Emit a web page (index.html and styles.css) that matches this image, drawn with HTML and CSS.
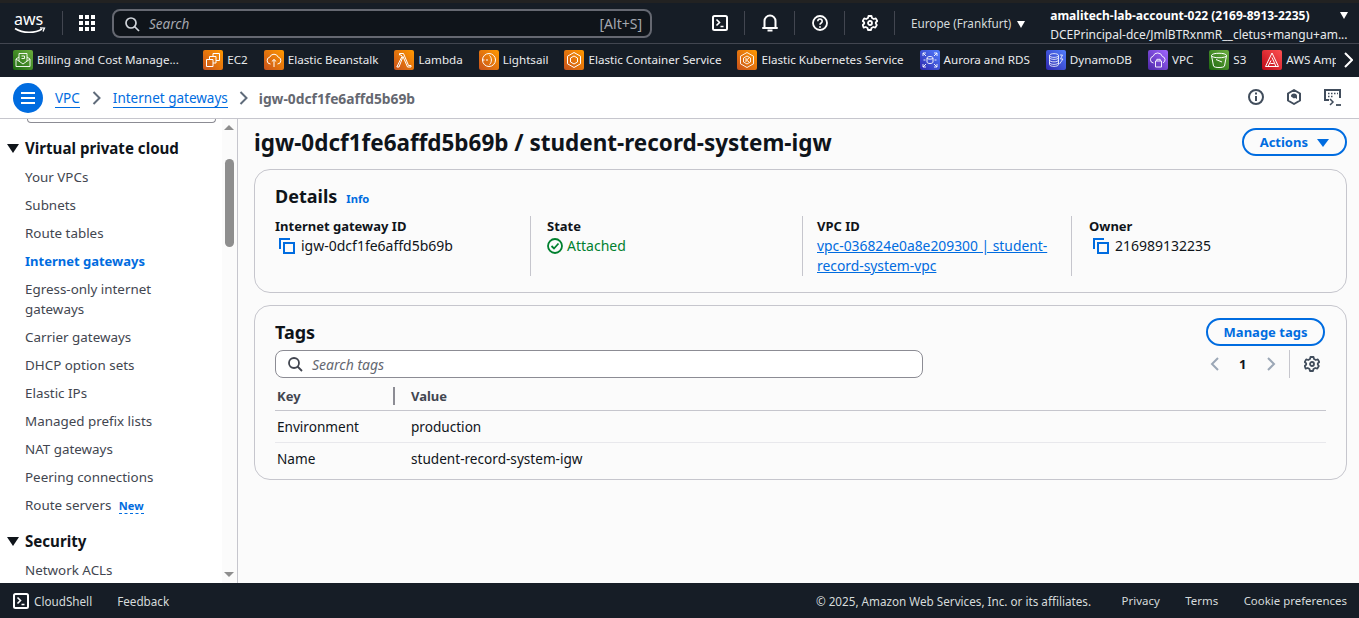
FILE: index.html
```html
<!DOCTYPE html>
<html lang="en">
<head>
    <meta charset="UTF-8">
    <meta name="viewport" content="width=device-width, initial-scale=1.0">
    <title>igw-0dcf1fe6affd5b69b | VPC Console</title>
    <link rel="stylesheet" href="styles.css">
</head>
<body>

    <!-- Top bar -->
    <header class="topnav">
        <div class="aws-logo">
            <span class="aws-text">aws</span>
            <svg width="32" height="8" viewBox="0 0 32 8">
                <path d="M1 1.500c8 5 20 5 27 .5" fill="none" stroke="#fff" stroke-width="1.600"/>
                <path d="M26 .8l4.500 .2-1.500 3.600" fill="none" stroke="#fff" stroke-width="1.300"/>
            </svg>
        </div>
        <span class="nav-sep first"></span>
        <svg class="grid-icon" width="16" height="16" viewBox="0 0 16 16" fill="#fff">
            <rect x="0" y="0" width="4" height="4"/><rect x="6" y="0" width="4" height="4"/><rect x="12" y="0" width="4" height="4"/>
            <rect x="0" y="6" width="4" height="4"/><rect x="6" y="6" width="4" height="4"/><rect x="12" y="6" width="4" height="4"/>
            <rect x="0" y="12" width="4" height="4"/><rect x="6" y="12" width="4" height="4"/><rect x="12" y="12" width="4" height="4"/>
        </svg>
        <div class="nav-search">
            <svg width="16" height="16" viewBox="0 0 16 16" fill="none" stroke="#d1d5db" stroke-width="1.700"><circle cx="7" cy="7" r="5"/><path d="M10.500 10.500l4.500 4.500"/></svg>
            <span class="nav-search-text">Search</span>
            <span class="nav-shortcut">[Alt+S]</span>
        </div>
        <div class="nav-icons">
            <span class="nav-icon"><svg width="16" height="16" viewBox="0 0 16 16" fill="none" stroke="#fff" stroke-width="2"><rect x="1" y="1" width="14" height="14" rx="1.500"/><path d="M4.500 4.500l3 3-3 3M8.500 11.500h3" stroke-width="1.600"/></svg></span>
            <span class="nav-icon"><svg width="16" height="18" viewBox="0 0 16 18" fill="none" stroke="#fff" stroke-width="2"><path d="M2.500 13V7a5.500 5.500 0 0 1 11 0v6l1.500 1H1z" stroke-linejoin="round"/><path d="M5.500 16.500h5"/></svg></span>
            <span class="nav-icon"><svg width="16" height="16" viewBox="0 0 16 16" fill="none" stroke="#fff" stroke-width="1.800"><circle cx="8" cy="8" r="7"/><path d="M5.800 6.200a2.200 2.200 0 1 1 3.400 1.800c-.8.500-1.200 1-1.200 1.800" stroke-width="1.600"/><path d="M8 11.200v1.600"/></svg></span>
            <span class="nav-icon"><svg width="16" height="16" viewBox="0 0 16 16" fill="none" stroke="#fff" stroke-width="1.800"><path d="M6.500 1h3l.5 2 1.800 1 2-.6 1.500 2.600-1.500 1.400v1.200L14.800 10l-1.500 2.600-2-.6-1.800 1-.5 2h-3l-.5-2-1.800-1-2 .6L.7 10l1.500-1.400V7.400L.7 6l1.500-2.600 2 .6L6 3z" stroke-linejoin="round"/><circle cx="8" cy="8" r="2"/></svg></span>
        </div>
        <span class="nav-region">Europe (Frankfurt) <i class="caret-white"></i></span>
        <div class="nav-account">
            <div class="account-name">amalitech-lab-account-022 (2169-8913-2235)<i class="caret-white account-caret"></i></div>
            <div class="account-role">DCEPrincipal-dce/JmlBTRxnmR__cletus+mangu+am...</div>
        </div>
    </header>

    <!-- Favorites -->
    <nav class="favbar">
        <span class="fav fav-first"><svg class="fav-icon" viewBox="-2 0 20 20"><defs><linearGradient id="gGreen" x1="0" y1="1" x2="1" y2="0"><stop offset="0" stop-color="#1b660f"/><stop offset="1" stop-color="#6cae3e"/></linearGradient></defs><rect x="-2" width="20" height="20" rx="2" fill="url(#gGreen)"/><path d="M1 9l7 5 7-5v7.500H1zM1 9l3-2M15 9l-3-2M4 11V3.500h8V11M6.500 6h3v2.500h-3" fill="none" stroke="#fff" stroke-width=".9"/></svg>Billing and Cost Manage...</span>
        <span class="fav"><svg class="fav-icon" viewBox="-2 0 20 20"><defs><linearGradient id="gOrange" x1="0" y1="1" x2="1" y2="0"><stop offset="0" stop-color="#c8511b"/><stop offset="1" stop-color="#ff9900"/></linearGradient></defs><rect x="-2" width="20" height="20" rx="2" fill="url(#gOrange)"/><path d="M1.500 9.500h6.500v7H1.500zM4.500 9.500V6.500h6.500v6.500H8M8 6.500V3.500h6.500v7H11" fill="none" stroke="#fff" stroke-width="1"/></svg>EC2</span>
        <span class="fav"><svg class="fav-icon" viewBox="-2 0 20 20"><rect x="-2" width="20" height="20" rx="2" fill="url(#gOrange)"/><path d="M4.500 14a3.500 3.500 0 0 1-.7-6.900 4.500 4.500 0 0 1 8.400 0 3.500 3.500 0 0 1-.7 6.900M8 17V9.500M5.800 11.500L8 9.500l2.200 2" fill="none" stroke="#fff" stroke-width="1"/></svg>Elastic Beanstalk</span>
        <span class="fav"><svg class="fav-icon" viewBox="-2 0 20 20"><rect x="-2" width="20" height="20" rx="2" fill="url(#gOrange)"/><path d="M3.500 3.500h4l5 12h2.500v1.500h-3.500l-4.500-10.500L3 17H.8l5.200-10.500L5.200 5H3.500z" fill="none" stroke="#fff" stroke-width="1"/></svg>Lambda</span>
        <span class="fav"><svg class="fav-icon" viewBox="-2 0 20 20"><rect x="-2" width="20" height="20" rx="2" fill="url(#gOrange)"/><circle cx="8" cy="10" r="6.500" fill="none" stroke="#fff"/><path d="M1.500 10h2M5 10h2M8.500 5.500c2.500 2 2.500 7 0 9" fill="none" stroke="#fff"/></svg>Lightsail</span>
        <span class="fav"><svg class="fav-icon" viewBox="-2 0 20 20"><rect x="-2" width="20" height="20" rx="2" fill="url(#gOrange)"/><path d="M8 2.500l6.500 3.700v7.600L8 17.500l-6.500-3.700V6.200zM8 6l3.500 2v4L8 14l-3.500-2V8z" fill="none" stroke="#fff"/></svg>Elastic Container Service</span>
        <span class="fav"><svg class="fav-icon" viewBox="-2 0 20 20"><rect x="-2" width="20" height="20" rx="2" fill="url(#gOrange)"/><path d="M8 2.500l6.500 3.700v7.600L8 17.500l-6.500-3.700V6.200zM8 6l3.500 2v4L8 14l-3.500-2V8zM7 8v4M10 8L7.500 10l2.500 2" fill="none" stroke="#fff" stroke-width=".9"/></svg>Elastic Kubernetes Service</span>
        <span class="fav"><svg class="fav-icon" viewBox="-2 0 20 20"><defs><linearGradient id="gBlue" x1="0" y1="1" x2="1" y2="0"><stop offset="0" stop-color="#2e27ad"/><stop offset="1" stop-color="#527fff"/></linearGradient></defs><rect x="-2" width="20" height="20" rx="2" fill="url(#gBlue)"/><path d="M1 6V3h3M12 3h3v3M1 14v3h3M12 17h3v-3M1 3l3 3M15 3l-3 3M1 17l3-3M15 17l-3-3M5 8c0-2 6-2 6 0v4c0 2-6 2-6 0zM5 8c0 1.500 6 1.500 6 0M1.500 10h2M12.500 10h2" fill="none" stroke="#fff" stroke-width=".9"/></svg>Aurora and RDS</span>
        <span class="fav"><svg class="fav-icon" viewBox="-2 0 20 20"><rect x="-2" width="20" height="20" rx="2" fill="url(#gBlue)"/><path d="M1.500 5.500c0-2.500 9-2.500 9 0v9c0 2.500-9 2.500-9 0zM1.500 5.500c0 2.500 9 2.500 9 0M1.500 10c0 2.500 9 2.500 9 0M1.500 7.500c0 2.500 9 2.500 9 0M1.500 12.500c0 2.500 9 2.500 9 0M12 5h2.500L12.500 9H15l-3.500 5" fill="none" stroke="#fff" stroke-width=".8"/></svg>DynamoDB</span>
        <span class="fav"><svg class="fav-icon" viewBox="-2 0 20 20"><defs><linearGradient id="gPurple" x1="0" y1="1" x2="1" y2="0"><stop offset="0" stop-color="#4d27a8"/><stop offset="1" stop-color="#a166ff"/></linearGradient></defs><rect x="-2" width="20" height="20" rx="2" fill="url(#gPurple)"/><path d="M3.500 13a3.400 3.400 0 0 1-.4-6.700 4.800 4.800 0 0 1 9.200.2 3.300 3.300 0 0 1 .7 6.300M5.500 11h6v6h-6zM6.800 11V9.300h3.400V11" fill="none" stroke="#fff" stroke-width=".9"/></svg>VPC</span>
        <span class="fav"><svg class="fav-icon" viewBox="-2 0 20 20"><rect x="-2" width="20" height="20" rx="2" fill="url(#gGreen)"/><path d="M.5 5.500c0-3 15-3 15 0l-2 10.500c-.4 2-10.600 2-11 0zM.5 5.500c0 3 15 3 15 0M5 9.500l6 2.500" fill="none" stroke="#fff"/></svg>S3</span>
        <span class="fav fav-amp"><svg class="fav-icon" viewBox="-2 0 20 20"><defs><linearGradient id="gRed" x1="0" y1="1" x2="1" y2="0"><stop offset="0" stop-color="#bd0816"/><stop offset="1" stop-color="#ff5252"/></linearGradient></defs><rect x="-2" width="20" height="20" rx="2" fill="url(#gRed)"/><path d="M8 3l6.500 13.500h-13zM8 7.500l4 9M4 16.500l3-6M6.300 13.500h3.500" fill="none" stroke="#fff"/></svg><span class="fav-cut">AWS Amplify</span></span>
        <svg class="fav-more" width="10" height="16" viewBox="0 0 10 16" fill="none" stroke="#fff" stroke-width="2"><path d="M2 1l7 7-7 7"/></svg>
    </nav>

    <!-- Breadcrumbs -->
    <div class="crumbbar">
        <span class="menu-btn"><svg width="16" height="14" viewBox="0 0 16 14" stroke="#fff" stroke-width="2"><path d="M1 2h14M1 7h14M1 12h14"/></svg></span>
        <a class="crumb">VPC</a>
        <svg class="crumb-sep" width="9" height="14" viewBox="0 0 9 14" fill="none" stroke="#5f6b7a" stroke-width="2"><path d="M1.500 1l6 6-6 6"/></svg>
        <a class="crumb">Internet gateways</a>
        <svg class="crumb-sep crumb-sep-last" width="9" height="14" viewBox="0 0 9 14" fill="none" stroke="#5f6b7a" stroke-width="2"><path d="M1.500 1l6 6-6 6"/></svg>
        <span class="crumb-current">igw-0dcf1fe6affd5b69b</span>
        <div class="crumb-tools">
            <svg width="16" height="16" viewBox="0 0 16 16" fill="none" stroke="#414d5c" stroke-width="2"><circle cx="8" cy="8" r="7"/><path d="M8 7v5M8 3.500v2"/></svg>
            <svg width="16" height="16" viewBox="0 0 16 16" fill="none" stroke="#414d5c" stroke-width="2"><path d="M8 1l6 3.500v7L8 15l-6-3.500v-7z" stroke-linejoin="round"/><path d="M5 7.500a3 3 0 0 1 6 0L8 9.500z" fill="#414d5c" stroke="none"/><path d="M5 6.500l6 3.500v-3L8 5z" fill="#414d5c" stroke="none"/></svg>
            <svg width="17" height="17" viewBox="0 0 17 17" fill="none" stroke="#414d5c" stroke-width="2"><path d="M5 11H1V1h15v8"/><path d="M4 4.500h1.500M7 4.500h1.500M10 4.500h1.500M13 4.500h1M4 7.500h1.500M7 7.500h1.500" stroke-width="1.500"/><path d="M6 10l3 3-3 3" stroke-width="1.500"/><path d="M12 16h5" stroke-width="1.800"/></svg>
        </div>
    </div>

    <div class="layout">
        <!-- Side navigation -->
        <aside class="sidenav">
            <div class="sidenav-list">
                <div class="side-filter"></div>
                <div class="side-head"><i class="caret-dark"></i>Virtual private cloud</div>
                <a class="side-link">Your VPCs</a>
                <a class="side-link">Subnets</a>
                <a class="side-link">Route tables</a>
                <a class="side-link active">Internet gateways</a>
                <a class="side-link">Egress-only internet gateways</a>
                <a class="side-link">Carrier gateways</a>
                <a class="side-link">DHCP option sets</a>
                <a class="side-link">Elastic IPs</a>
                <a class="side-link">Managed prefix lists</a>
                <a class="side-link">NAT gateways</a>
                <a class="side-link">Peering connections</a>
                <a class="side-link">Route servers <span class="badge-new">New</span></a>
                <div class="side-head side-head-2"><i class="caret-dark"></i>Security</div>
                <a class="side-link">Network ACLs</a>
            </div>
            <div class="scrollbar">
                <i class="scroll-up"></i>
                <span class="scroll-thumb"></span>
                <i class="scroll-down"></i>
            </div>
        </aside>

        <!-- Content -->
        <main class="content">
            <div class="page-head">
                <h1>igw-0dcf1fe6affd5b69b / student-record-system-igw</h1>
                <button class="btn btn-actions">Actions <i class="caret-blue"></i></button>
            </div>

            <section class="card details">
                <h2>Details <a class="info">Info</a></h2>
                <div class="columns">
                    <div class="col col-1">
                        <div class="label">Internet gateway ID</div>
                        <div class="value copy">
                            <svg class="copy-icon" width="16" height="16" viewBox="0 0 16 16" fill="none" stroke="#006ce0" stroke-width="2"><path d="M1 11V1h10"/><rect x="5" y="5" width="10" height="10"/></svg>
                            igw-0dcf1fe6affd5b69b
                        </div>
                    </div>
                    <div class="col col-2">
                        <div class="label">State</div>
                        <div class="value state">
                            <svg width="16" height="16" viewBox="0 0 16 16" fill="none" stroke="#00802f" stroke-width="1.800"><circle cx="8" cy="8" r="7"/><path d="M4.500 8l2.500 2.500 4.500-5"/></svg>
                            Attached
                        </div>
                    </div>
                    <div class="col col-3">
                        <div class="label">VPC ID</div>
                        <a class="value link">vpc-036824e0a8e209300 | student-record-system-vpc</a>
                    </div>
                    <div class="col col-4">
                        <div class="label">Owner</div>
                        <div class="value copy">
                            <svg class="copy-icon" width="16" height="16" viewBox="0 0 16 16" fill="none" stroke="#006ce0" stroke-width="2"><path d="M1 11V1h10"/><rect x="5" y="5" width="10" height="10"/></svg>
                            216989132235
                        </div>
                    </div>
                </div>
            </section>

            <section class="card tags">
                <div class="tags-head">
                    <h2>Tags</h2>
                    <button class="btn btn-manage">Manage tags</button>
                </div>
                <div class="tags-tools">
                    <div class="tag-search">
                        <svg width="16" height="16" viewBox="0 0 16 16" fill="none" stroke="#424650" stroke-width="1.800"><circle cx="7" cy="7" r="5"/><path d="M10.500 10.500l4.500 4.500"/></svg>
                        <span>Search tags</span>
                    </div>
                    <div class="pager">
                        <svg width="9" height="14" viewBox="0 0 9 14" fill="none" stroke="#9ba7b6" stroke-width="2"><path d="M8 1L2 7l6 6"/></svg>
                        <b>1</b>
                        <svg width="9" height="14" viewBox="0 0 9 14" fill="none" stroke="#9ba7b6" stroke-width="2"><path d="M1 1l6 6-6 6"/></svg>
                        <span class="pager-sep"></span>
                        <svg width="16" height="16" viewBox="0 0 16 16" fill="none" stroke="#414d5c" stroke-width="1.800"><path d="M6.500 1h3l.5 2 1.800 1 2-.6 1.500 2.600-1.500 1.400v1.200L14.800 10l-1.500 2.600-2-.6-1.800 1-.5 2h-3l-.5-2-1.800-1-2 .6L.7 10l1.500-1.400V7.400L.7 6l1.500-2.600 2 .6L6 3z" stroke-linejoin="round"/><circle cx="8" cy="8" r="2"/></svg>
                    </div>
                </div>
                <table class="tag-table">
                    <thead>
                        <tr><th class="key-col"><span class="th-inner">Key</span></th><th>Value</th></tr>
                    </thead>
                    <tbody>
                        <tr><td>Environment</td><td>production</td></tr>
                        <tr><td>Name</td><td>student-record-system-igw</td></tr>
                    </tbody>
                </table>
            </section>
        </main>
    </div>

    <!-- Footer -->
    <footer class="footer">
        <svg width="16" height="16" viewBox="0 0 16 16" fill="none" stroke="#fff" stroke-width="2"><rect x="1" y="1" width="14" height="14" rx="1.500"/><path d="M4.500 4.500l3 3-3 3M8.500 11.500h3" stroke-width="1.600"/></svg>
        <span class="foot-shell">CloudShell</span>
        <span class="foot-feedback">Feedback</span>
        <span class="foot-copy">© 2025, Amazon Web Services, Inc. or its affiliates.</span>
        <span class="foot-link">Privacy</span>
        <span class="foot-link">Terms</span>
        <span class="foot-link">Cookie preferences</span>
    </footer>

</body>
</html>
```

FILE: styles.css
```css
* {
    box-sizing: border-box;
}
html, body {
    height: 100%;
}
body {
    margin: 0;
    height: 618px;
    overflow: hidden;
    display: flex;
    flex-direction: column;
    font-family: "Noto Sans", sans-serif;
    font-size: 13px;
    color: #0f141a;
    background: #fbfbfb;
}

/* top bar */
.topnav {
    height: 44px;
    flex: none;
    display: flex;
    align-items: center;
    padding-left: 14px;
    background: #161d26;
    border-top: 3px solid #222;
    border-bottom: 1px solid #424650;
    color: #fff;
}
.aws-logo {
    width: 34px;
    flex: none;
    display: flex;
    flex-direction: column;
}
.aws-logo svg {
    display: block;
}
.aws-text {
    font-size: 16px;
    line-height: 16px;
}
.nav-sep.first {
    width: 1px;
    height: 24px;
    flex: none;
    margin: 0 16px 0 14px;
    background: #424650;
}
.grid-icon {
    flex: none;
}
.nav-search {
    width: 540px;
    height: 29px;
    flex: none;
    margin-left: 17px;
    padding: 1px 8px 0 10px;
    display: flex;
    align-items: center;
    background: #0f141a;
    border: 2px solid #656871;
    border-radius: 8px;
}
.nav-search-text {
    margin-left: 9px;
    font-size: 13.500px;
    font-style: italic;
    color: #a4a7af;
}
.nav-shortcut {
    margin-left: auto;
    font-size: 14px;
    color: #a4a7af;
}
.nav-icons {
    display: flex;
    flex: none;
    margin-left: 43px;
}
.nav-icon {
    width: 50px;
    height: 24px;
    display: flex;
    align-items: center;
    justify-content: center;
    border-right: 1px solid #424650;
}
.nav-region {
    flex: none;
    margin-left: 16px;
    font-size: 11.700px;
    color: #d5dbdb;
    white-space: nowrap;
}
.caret-white {
    display: inline-block;
    width: 0;
    height: 0;
    margin-left: 3px;
    border-style: solid;
    border-width: 7px 4.500px 0;
    border-color: #fff transparent transparent;
}
.nav-account {
    flex: none;
    width: 300px;
    margin: 3px 0 0 25px;
    font-size: 12px;
    white-space: nowrap;
    line-height: 19px;
}
.account-name {
    display: flex;
    align-items: center;
    font-weight: 700;
}
.account-caret {
    margin-left: 31px;
}
.account-role {
    color: #e9ebed;
}

/* favorites */
.favbar {
    height: 33px;
    flex: none;
    display: flex;
    align-items: center;
    padding: 0 6px 1px 13px;
    background: #161d26;
    color: #e9ebed;
    font-size: 11.630px;
    white-space: nowrap;
}
.fav {
    display: flex;
    align-items: center;
    gap: 4px;
    margin-right: 16px;
    line-height: 18px;
}
.fav-first {
    margin-right: 24.500px;
}
.fav-amp {
    margin-right: 0;
}
.fav-icon {
    width: 20px;
    height: 20px;
    flex: none;
}
.fav-cut {
    display: block;
    width: 50px;
    overflow: hidden;
}
.fav-more {
    flex: none;
    margin-left: auto;
}

/* breadcrumbs */
.crumbbar {
    height: 42px;
    flex: none;
    display: flex;
    align-items: center;
    padding: 0 18px 0 13px;
    background: #fff;
    border-bottom: 1px solid #c6c6cd;
    font-size: 13.500px;
}
.menu-btn {
    width: 30px;
    height: 30px;
    margin-right: 12px;
    display: flex;
    align-items: center;
    justify-content: center;
    background: #006ce0;
    border-radius: 50%;
}
.crumb {
    padding-top: 2px;
    color: #006ce0;
    border-bottom: 1px solid #006ce0;
    line-height: 17px;
}
.crumb-sep {
    margin: 0 12px;
    flex: none;
}
.crumb-sep-last {
    margin: 0 11px;
}
.crumb-current {
    padding-top: 2px;
    color: #656871;
    font-size: 13.800px;
    font-weight: 700;
}
.crumb-tools {
    margin-left: auto;
    display: flex;
    gap: 22px;
}

.layout {
    flex: 1;
    display: flex;
    min-height: 0;
}

/* side navigation */
.sidenav {
    width: 238px;
    flex: none;
    display: flex;
    background: #fff;
    border-right: 1px solid #c6c6cd;
    overflow: hidden;
}
.sidenav-list {
    width: 222px;
    flex: none;
    overflow: hidden;
    padding: 0 20px 0 25px;
}
.side-filter {
    width: 189px;
    height: 4px;
    margin-left: 2px;
    border: 1px solid #8c8c94;
    border-top: 0;
    border-radius: 0 0 8px 8px;
}
.side-head {
    position: relative;
    margin-top: 14px;
    font-size: 15.100px;
    font-weight: 700;
    line-height: 22px;
    margin-bottom: 4px;
}
.side-head-2 {
    margin-top: 10px;
    margin-bottom: 4px;
}
.caret-dark {
    position: absolute;
    left: -18px;
    top: 7px;
    width: 0;
    height: 0;
    border-style: solid;
    border-width: 9px 6px 0;
    border-color: #0f141a transparent transparent;
}
.side-link {
    display: block;
    padding: 4px 0;
    font-size: 13.400px;
    line-height: 20px;
    color: #424650;
}
.side-link.active {
    color: #006ce0;
    font-size: 13px;
    font-weight: 700;
}
.badge-new {
    margin-left: 4px;
    color: #006ce0;
    font-size: 11px;
    font-weight: 700;
    border-bottom: 1px dashed #006ce0;
}
.scrollbar {
    width: 15px;
    flex: none;
    position: relative;
    background: #fbfbfb;
}
.scroll-thumb {
    position: absolute;
    left: 3px;
    top: 40px;
    width: 9px;
    height: 88px;
    background: #8e8e8e;
    border-radius: 5px;
}
.scroll-up, .scroll-down {
    position: absolute;
    left: 2px;
    width: 0;
    height: 0;
    border-style: solid;
}
.scroll-up {
    top: 6px;
    border-width: 0 5px 5px;
    border-color: transparent transparent #8e8e8e;
}
.scroll-down {
    bottom: 6px;
    border-width: 5px 5px 0;
    border-color: #8e8e8e transparent transparent;
}

/* content */
.content {
    flex: 1;
    min-width: 0;
    padding: 0 12px 0 16px;
}
.page-head {
    height: 50px;
    padding-bottom: 4px;
    display: flex;
    align-items: center;
    justify-content: space-between;
}
h1 {
    margin: 2px 0 0;
    font-size: 22.480px;
    font-weight: 700;
    line-height: 30px;
}
.btn {
    height: 28px;
    background: #fff0;
    color: #006ce0;
    border: 2px solid #006ce0;
    border-radius: 14px;
    font: 700 13px "Noto Sans", sans-serif;
}
.btn-actions {
    width: 105px;
}
.caret-blue {
    display: inline-block;
    width: 0;
    height: 0;
    margin-left: 6px;
    border-style: solid;
    border-width: 8px 6px 0;
    border-color: #006ce0 transparent transparent;
}
.card {
    border: 1px solid #c6c6cd;
    border-radius: 16px;
}
h2 {
    margin: 0;
    display: flex;
    align-items: baseline;
    gap: 9px;
    font-size: 18px;
    font-weight: 700;
    line-height: 24px;
}
.info {
    color: #006ce0;
    font-size: 11.200px;
    line-height: 14px;
}
.details {
    height: 124px;
    padding: 14px 20px 0;
}
.columns {
    display: flex;
    margin-top: 8px;
}
.col {
    height: 60px;
    line-height: 20px;
}
.col-1 {
    width: 256px;
    border-right: 1px solid #c6c6cd;
}
.col-2 {
    width: 272px;
    padding-left: 16px;
    border-right: 1px solid #c6c6cd;
}
.col-3 {
    width: 269px;
    padding: 0 20px 0 14px;
    border-right: 1px solid #c6c6cd;
}
.col-4 {
    padding-left: 17px;
}
.label {
    font-weight: 700;
}
.value {
    display: flex;
    align-items: center;
    gap: 6px;
    font-size: 14px;
}
.copy-icon {
    margin-left: 4px;
    flex: none;
}
.state {
    color: #00802f;
    gap: 4px;
}
.value.link {
    display: block;
    font-size: 13.850px;
    color: #006ce0;
    text-decoration: underline;
}
.tags {
    height: 175px;
    margin-top: 12px;
    padding: 12px 20px 0;
}
.tags-head {
    display: flex;
    align-items: center;
    justify-content: space-between;
    height: 28px;
}
.btn-manage {
    width: 119px;
    margin-right: 1px;
}
.tags-tools {
    display: flex;
    justify-content: space-between;
    margin-top: 4px;
}
.tag-search {
    width: 648px;
    height: 28px;
    padding-left: 11px;
    display: flex;
    align-items: center;
    gap: 9px;
    border: 1px solid #8c8c94;
    border-radius: 8px;
    background: #fff;
    font-size: 14px;
    font-style: italic;
    color: #656871;
}
.pager {
    display: flex;
    align-items: center;
    margin-right: 6px;
}
.pager b {
    margin: 0 20.500px;
}
.pager-sep {
    width: 1px;
    height: 28px;
    margin: 0 14px 0 13px;
    background: #c6c6cd;
}
.tag-table {
    width: 100%;
    border-collapse: collapse;
    margin-top: 3px;
}
.tag-table th {
    height: 29px;
    padding: 1px 2px 0;
    text-align: left;
    color: #424650;
    font-weight: 700;
    border-bottom: 1px solid #c6c6cd;
}
.tag-table th.key-col {
    width: 120px;
    padding-right: 0;
}
.tag-table th + th, .tag-table td + td {
    padding-left: 16px;
}
.th-inner {
    display: block;
    border-right: 2px solid #8c8c94;
    line-height: 18px;
}
.tag-table td {
    height: 32px;
    padding: 0 2px;
    font-size: 13.600px;
    border-bottom: 1px solid #e8e8ec;
}
.tag-table tr:last-child td {
    border-bottom: 0;
}

/* footer */
.footer {
    height: 35px;
    flex: none;
    display: flex;
    align-items: center;
    padding: 0 12px 0 13px;
    background: #161d26;
    color: #d5dbdb;
    font-size: 11.700px;
    white-space: nowrap;
}
.foot-shell {
    margin-left: 5px;
}
.foot-feedback {
    margin-left: 25px;
}
.foot-copy {
    margin: 0 5px 0 auto;
}
.foot-link {
    margin-left: 25.500px;
    font-size: 11.450px;
}
```
